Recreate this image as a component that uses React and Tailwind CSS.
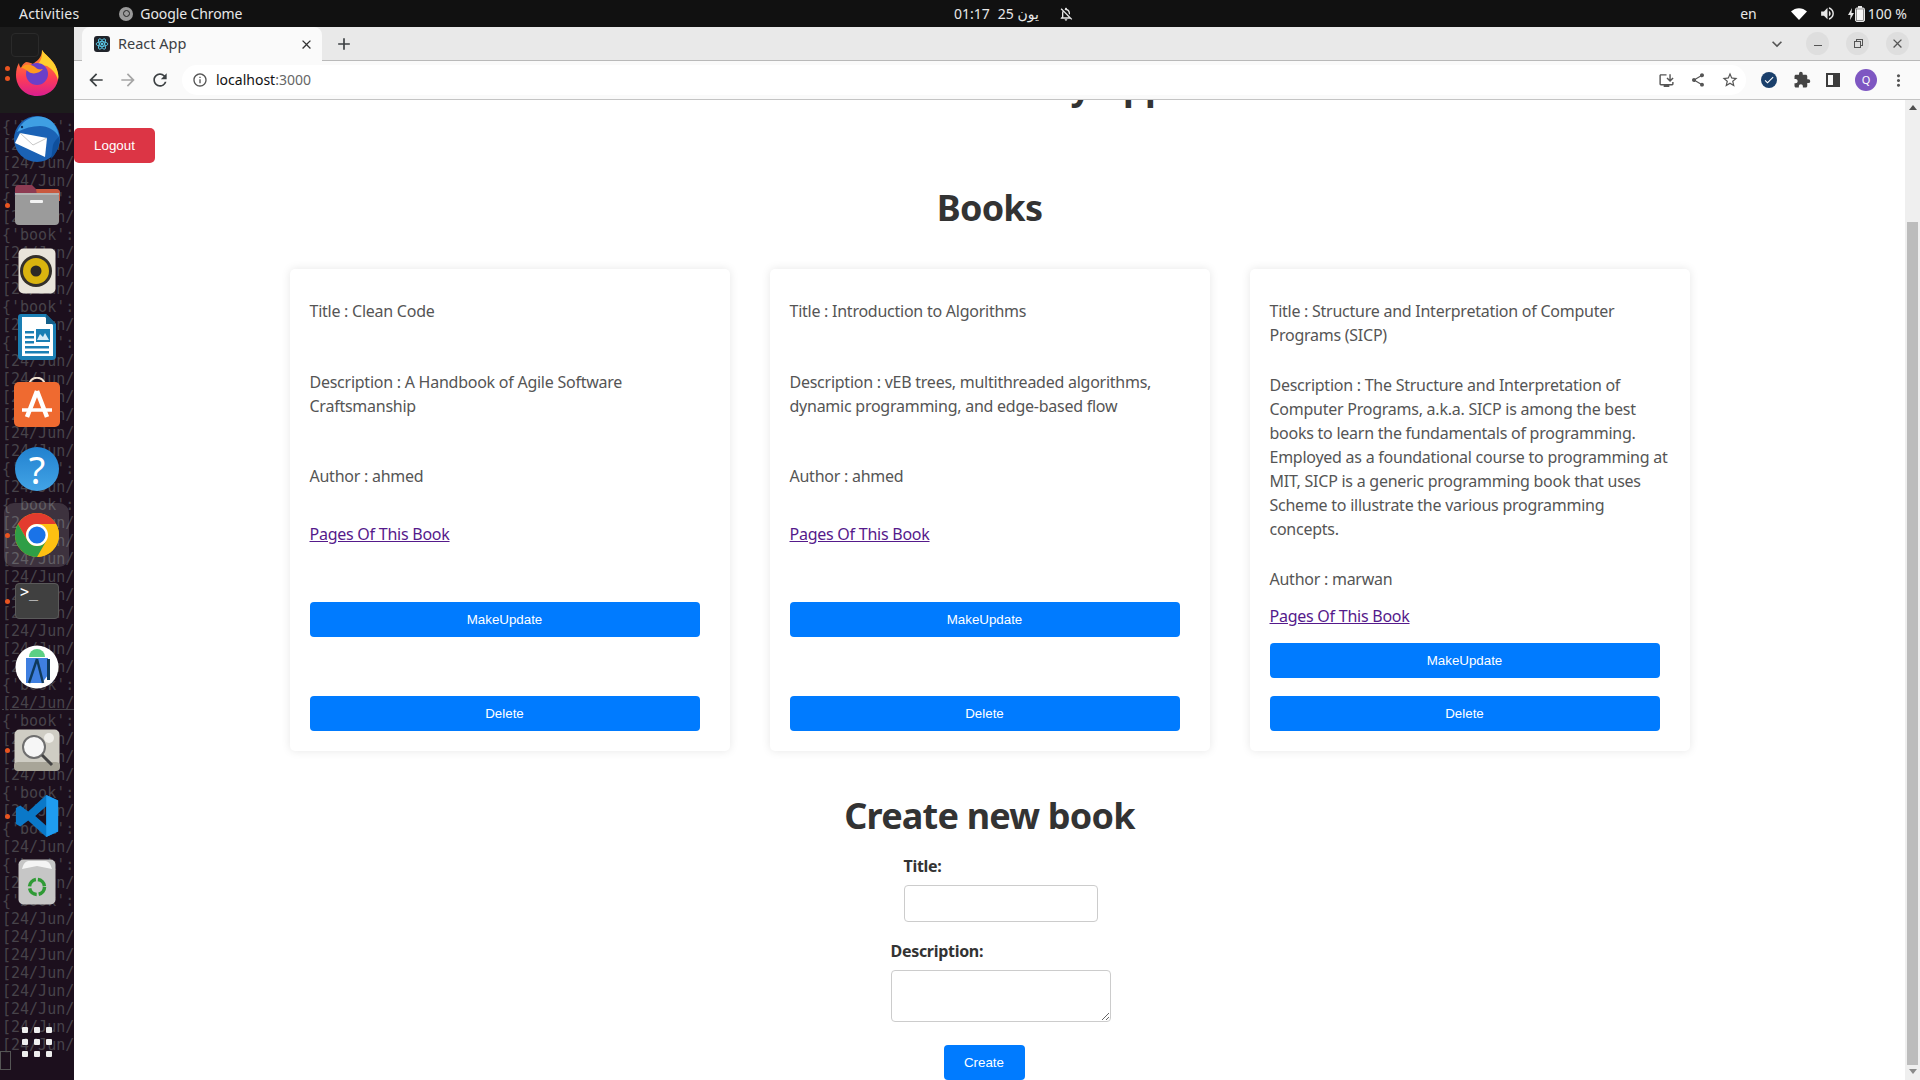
import React from 'react';
import {
    MdArrowBack,
    MdArrowForward,
    MdRefresh,
    MdInfoOutline,
    MdClose,
    MdAdd,
    MdExpandMore,
    MdMoreVert,
    MdExtension,
    MdShare,
    MdStarBorder,
    MdInstallDesktop,
    MdCheck,
    MdVolumeUp,
    MdOutlineNotificationsOff,
} from 'react-icons/md';

const UI_FONT = "font-['Noto_Sans','DejaVu_Sans',sans-serif]";

// b = {'book': line, j = [24/Jun/ line
const TERMINAL_LINES = 'bjjjbjbjjjbjbjjjjjjbjbjjjjjjjjjbjbjjjbjbjbjbjjjjjjjj'.split('');

const books = [
    {
        title: 'Clean Code',
        description: 'A Handbook of Agile Software Craftsmanship',
        author: 'ahmed',
    },
    {
        title: 'Introduction to Algorithms',
        description:
            'vEB trees, multithreaded algorithms, dynamic programming, and edge-based flow',
        author: 'ahmed',
    },
    {
        title: 'Structure and Interpretation of Computer Programs (SICP)',
        description:
            'The Structure and Interpretation of Computer Programs, a.k.a. SICP is among the best books to learn the fundamentals of programming. Employed as a foundational course to programming at MIT, SICP is a generic programming book that uses Scheme to illustrate the various programming concepts.',
        author: 'marwan',
        compact: true,
    },
];

function Firefox() {
    return (
        <svg width="44" height="46" viewBox="0 0 44 46">
            <defs>
                <linearGradient id="ffBody" x1="0" y1="0" x2="0" y2="1">
                    <stop offset="0" stopColor="#ff9b1f" />
                    <stop offset="0.6" stopColor="#ff3d55" />
                    <stop offset="1" stopColor="#d91e8f" />
                </linearGradient>
            </defs>
            <path
                d="M27 0c3 5 9 8 13 15 3 6 4 11 3 15-2 10-11 16-21 16C10 46 1 37 1 25c0-5 1-9 3-12 0 2 1 4 2 5 1-3 3-5 5-6 3 0 5 1 7 2 3-3 9-5 9-14z"
                fill="url(#ffBody)"
            />
            <path d="M27 0c3 5 9 8 13 15 3 6 4 11 3 15-2-7-6-11-11-14-3-1-8-1-11 0 3-3 7-7 6-16z" fill="#ffcf2e" />
            <circle cx="22" cy="24" r="11" fill="#6a3fc8" />
            <path d="M6 18c4-5 10-4 14-1 2 2 4 3 8 2-3 4-10 6-14 3-3-2-5-4-8-4z" fill="#ff9a1f" />
        </svg>
    );
}

function Thunderbird() {
    return (
        <svg width="48" height="48" viewBox="0 0 48 48">
            <circle cx="24" cy="24" r="23" fill="#1b62b5" />
            <path d="M4 17C10 3 22 0 30 2c9 2 15 10 16 20-4-7-11-11-19-11-8 0-15 2-23 6z" fill="#3f9fe3" />
            <path d="M38 44c6-6 9-14 8-22-3 2-5 5-6 8-1 5-1 10-2 14z" fill="#0f4f9c" />
            <path d="M7 18l27 5-2 19L2 28z" fill="#fff" />
            <path d="M7 18l13 12 14-7" fill="none" stroke="#b8b8b8" strokeWidth="0.8" />
            <circle cx="9" cy="12" r="1.2" fill="#0d2f5e" />
        </svg>
    );
}

function Files() {
    return (
        <svg width="46" height="42" viewBox="0 0 46 42">
            <path d="M1 5a4 4 0 0 1 4-4h13l4 4h20a4 4 0 0 1 4 4v8H1z" fill="#8e3b52" />
            <path d="M22 5h20a4 4 0 0 1 4 4v8H24z" fill="#c9593f" />
            <rect x="1" y="9" width="44" height="32" rx="4" fill="#9b9b9b" />
            <rect x="1" y="9" width="44" height="2" fill="#b4b4b4" />
            <rect x="16" y="16" width="13" height="3" rx="1" fill="#f3f3f3" />
        </svg>
    );
}

function Rhythmbox() {
    return (
        <svg width="38" height="46" viewBox="0 0 38 46">
            <rect width="37" height="45" x="0.5" y="0.5" rx="5" fill="#e8e4da" />
            <circle cx="18" cy="23" r="16" fill="#33302b" />
            <circle cx="18" cy="23" r="13" fill="#d9b40f" />
            <circle cx="18" cy="23" r="5.5" fill="#2c2a26" />
        </svg>
    );
}

function Writer() {
    return (
        <svg width="38" height="46" viewBox="0 0 38 46">
            <path d="M3 0h25l10 10v32a4 4 0 0 1-4 4H4a4 4 0 0 1-4-4V3a3 3 0 0 1 3-3z" fill="#1a7fb4" />
            <path d="M4 3h23l8 8v31H4z" fill="#fff" />
            <path d="M28 0l10 10H28z" fill="#135f8a" />
            <rect x="7" y="17" width="9" height="2.5" fill="#1a7fb4" />
            <rect x="7" y="22" width="9" height="2.5" fill="#1a7fb4" />
            <rect x="7" y="27" width="9" height="2.5" fill="#1a7fb4" />
            <rect x="7" y="32" width="24" height="2.5" fill="#1a7fb4" />
            <rect x="7" y="37" width="24" height="2.5" fill="#1a7fb4" />
            <rect x="18" y="15" width="14" height="13" fill="#1a7fb4" />
            <path d="M19 26l3-6 3 3 2-4 4 7z" fill="#d6ecf7" />
        </svg>
    );
}

function Software() {
    return (
        <svg className="-mt-[3px]" width="46" height="50" viewBox="0 0 46 50">
            <path d="M15 9c0-11 16-11 16 0" fill="none" stroke="#f2e3d2" strokeWidth="2" />
            <rect y="5" width="46" height="45" rx="5" fill="#ef6a30" />
            <path d="M23 14L13 40M23 14l10 26" stroke="#fff" strokeWidth="4.5" fill="none" />
            <path d="M8 33h30" stroke="#fff" strokeWidth="3.5" />
        </svg>
    );
}

function Help() {
    return (
        <div className="w-[44px] h-[44px] rounded-full bg-gradient-to-b from-[#2181cf] to-[#42a4e6] flex items-center justify-center text-white text-[38px] leading-none font-['Noto_Sans',sans-serif]">
            ?
        </div>
    );
}

function Chrome() {
    const red = 'M4.95 13A22 22 0 0 1 43.05 13L24 13A11 11 0 0 0 14.47 29.5Z';
    return (
        <svg width="48" height="48" viewBox="0 0 48 48">
            <circle cx="24" cy="24" r="22" fill="#fbbc04" />
            <path d={red} fill="#e33b2e" />
            <path d={red} fill="#fdc012" transform="rotate(120 24 24)" />
            <path d={red} fill="#2f9e46" transform="rotate(240 24 24)" />
            <circle cx="24" cy="24" r="11" fill="#fff" />
            <circle cx="24" cy="24" r="8.6" fill="#1a73e8" />
        </svg>
    );
}

function Terminal() {
    return (
        <div className="w-[44px] h-[36px] rounded-[4px] bg-[#404040] border border-[#5a5a5a] pl-[4px] text-white text-[15px] leading-[16px] font-['DejaVu_Sans_Mono',monospace]">
            &gt;_
        </div>
    );
}

function AndroidStudio() {
    return (
        <svg width="44" height="44" viewBox="0 0 44 44">
            <circle cx="22" cy="22" r="21.5" fill="#fff" />
            <path d="M14 12a8 8 0 0 1 16 0z" fill="#5bd085" />
            <path d="M11 13h22v17l-6 8H11z" fill="#3f7fe0" />
            <path d="M22 14l-8 24M22 14l6 24" stroke="#0f3a5c" strokeWidth="2.4" fill="none" />
            <rect x="32" y="14" width="3" height="21" fill="#0f3a5c" />
        </svg>
    );
}

function Search() {
    return (
        <svg width="46" height="42" viewBox="0 0 46 42">
            <rect width="45" height="41" x="0.5" y="0.5" rx="5" fill="#cfcdc4" />
            <rect y="33" width="46" height="9" rx="4" fill="#a8a598" />
            <circle cx="35" cy="9" r="5" fill="#efeee9" />
            <circle cx="20" cy="18" r="11" fill="#f6f6f6" stroke="#6f6f6f" strokeWidth="2" />
            <path d="M28 26l10 10" stroke="#444" strokeWidth="3" />
        </svg>
    );
}

function VsCode() {
    return (
        <svg width="44" height="44" viewBox="0 0 100 100">
            <path fillRule="evenodd" d="M71 2L98 15V85L71 98L30 60L12 74L2 68V32L12 26L30 40ZM71 28L46 50L71 72Z" fill="#0a78c8" />
            <path d="M71 2L98 15V85L71 98Z" fill="#1f9cf0" />
        </svg>
    );
}

function Trash() {
    return (
        <svg width="38" height="46" viewBox="0 0 38 46">
            <rect width="37" height="45" x="0.5" y="0.5" rx="5" fill="#c6c6c6" />
            <path d="M4 10C6 3 8 2 12 2h14c4 0 6 1 8 8l-15-3z" fill="#f4f4f4" />
            <circle cx="19" cy="28" r="7.5" fill="none" stroke="#2f9a35" strokeWidth="3.5" strokeDasharray="10 2" />
        </svg>
    );
}

function Battery() {
    return (
        <svg width="17" height="16" viewBox="0 0 17 16">
            <path d="M4 2L0 9h2.500L2 14l4-7H3.500z" fill="#e8e8e8" />
            <rect x="7.500" y="2" width="9" height="13.500" rx="1.500" fill="#e8e8e8" stroke="#e8e8e8" />
            <rect x="10" y="0" width="4" height="2" fill="#e8e8e8" />
            <rect x="8.500" y="3" width="7" height="11.500" fill="#f8f8f8" stroke="#333" strokeWidth="0.500" />
        </svg>
    );
}

function Wifi() {
    return (
        <svg width="16" height="12" viewBox="0 0 16 12">
            <path d="M0 3.500C4.500-1 11.500-1 16 3.500L8 12z" fill="#fff" />
        </svg>
    );
}

function DockItem({ dots = 0, active, className = '', children }) {
    return (
        <div className={`relative h-[66px] w-[74px] flex items-center justify-center shrink-0 ${className}`}>
            {active && (
                <span className="absolute left-[4px] right-[5px] top-px bottom-px rounded-[10px] bg-white/15" />
            )}
            {dots > 0 && (
                <span className="absolute left-[5px] top-0 bottom-0 flex flex-col justify-center gap-[5px]">
                    {Array.from({ length: dots }).map((_, i) => (
                        <span key={i} className="w-[5px] h-[5px] rounded-full bg-[#e95420]" />
                    ))}
                </span>
            )}
            <span className="relative">{children}</span>
        </div>
    );
}

function Dock() {
    return (
        <div className="relative w-[74px] shrink-0 overflow-hidden bg-[#1c0f1d]">
            <div className="h-[86px] bg-[#1c1c1c] flex flex-col items-center pt-[6px] pr-[24px]">
                <div className="w-[28px] h-[24px] rounded-[4px] border border-[#2a2a2a]"></div>
            </div>
            <div className="pt-[5px] pl-[2px] text-[15px] leading-[18px] text-[#47434a] font-['DejaVu_Sans_Mono',monospace] whitespace-nowrap">
                {TERMINAL_LINES.map((line, i) => (
                    <div key={i} className={i === 32 ? 'underline' : ''}>
                        {line === 'b' ? "{'book':" : '[24/Jun/'}
                    </div>
                ))}
            </div>

            <div className="absolute inset-0 flex flex-col pt-[13px]">
                <DockItem dots={2}><Firefox /></DockItem>
                <DockItem><Thunderbird /></DockItem>
                <DockItem dots={1}><Files /></DockItem>
                <DockItem><Rhythmbox /></DockItem>
                <DockItem><Writer /></DockItem>
                <DockItem><Software /></DockItem>
                <DockItem><Help /></DockItem>
                <DockItem dots={1} active><Chrome /></DockItem>
                <DockItem dots={1}><Terminal /></DockItem>
                <DockItem><AndroidStudio /></DockItem>
                <DockItem dots={1} className="mt-[17px]"><Search /></DockItem>
                <DockItem dots={1}><VsCode /></DockItem>
                <DockItem><Trash /></DockItem>
                <div className="mt-[112px] pl-[22px] grid grid-cols-3 gap-x-[6px] gap-y-[6px] w-fit">
                    {Array.from({ length: 9 }).map((_, i) => (
                        <span key={i} className="w-[6px] h-[6px] rounded-[1px] bg-[#eeeeee]" />
                    ))}
                </div>
            </div>
            <div className="absolute left-0 bottom-[10px] w-[11px] h-[19px] border border-[#555]"></div>
        </div>
    );
}

function TopBar() {
    return (
        <div className={`relative h-[27px] shrink-0 bg-[#111111] text-[#e8e8e8] text-[14px] flex items-center ${UI_FONT}`}>
            <span className="ml-[19px] tracking-[0.2px]">Activities</span>
            <span className="ml-[40px] w-[14px] h-[14px] rounded-full bg-[#9a9a9a] flex items-center justify-center">
                <span className="w-[7px] h-[7px] rounded-full border border-[#222]"></span>
            </span>
            <span className="ml-[7px] tracking-[-0.1px]">Google Chrome</span>

            <div className="absolute left-[954px] top-0 h-full flex items-center gap-[8px]">
                <span>01:17</span>
                <span>25 يون</span>
                <MdOutlineNotificationsOff className="ml-[11px] text-[16px]" />
            </div>

            <div className="ml-auto flex items-center mr-[13px]">
                <span>en</span>
                <span className="ml-[34px]"><Wifi /></span>
                <MdVolumeUp className="ml-[12px] text-[17px]" />
                <span className="ml-[12px]"><Battery /></span>
                <span className="ml-[3px]">100 %</span>
            </div>
        </div>
    );
}

function TabStrip() {
    return (
        <div className={`h-[34px] shrink-0 bg-[#e9e9e9] border-b border-[#b9b9b9] flex items-stretch pl-[8px] ${UI_FONT}`}>
            <div className="w-[240px] -mb-px bg-[#fafafa] rounded-t-[8px] flex items-center pl-[12px] pr-[8px] text-[14.5px] text-[#3c4043]">
                <span className="w-[16px] h-[16px] rounded-[3px] bg-[#20232a] flex items-center justify-center">
                    <svg width="14" height="14" viewBox="0 0 24 24" fill="none" stroke="#61dafb" strokeWidth="1.4">
                        <ellipse cx="12" cy="12" rx="10" ry="4" />
                        <ellipse cx="12" cy="12" rx="10" ry="4" transform="rotate(60 12 12)" />
                        <ellipse cx="12" cy="12" rx="10" ry="4" transform="rotate(120 12 12)" />
                        <circle cx="12" cy="12" r="1.6" fill="#61dafb" />
                    </svg>
                </span>
                <span className="ml-[8px] flex-1">React App</span>
                <MdClose className="text-[15px] text-[#333]" />
            </div>
            <div className="ml-[12px] flex items-center">
                <MdAdd className="text-[20px] text-[#3c4043]" />
            </div>
            <div className="ml-auto flex items-center text-[#555]">
                <MdExpandMore className="text-[20px] mr-[19px]" />
                {[
                    <span key="m" className="w-[8px] h-px mt-[4px] bg-[#555]" />,
                    <span key="r" className="relative w-[7px] h-[7px] border border-[#555] bg-[#dedede] mt-[1px] -ml-[1px] shadow-[2px_-2px_0_-1px_#dedede,2px_-2px_0_0_#555]" />,
                    <MdClose key="c" className="text-[15px]" />,
                ].map((icon, i) => (
                    <span key={i} className="w-[23px] h-[23px] rounded-full bg-[#dedede] flex items-center justify-center mr-[17px] last:mr-[11px]">
                        {icon}
                    </span>
                ))}
            </div>
        </div>
    );
}

function Toolbar() {
    return (
        <div className={`h-[39px] shrink-0 bg-[#fafafa] border-b border-[#c4c4c4] flex items-center ${UI_FONT}`}>
            <MdArrowBack className="ml-[12px] text-[20px] text-[#3c4043]" />
            <MdArrowForward className="ml-[12px] text-[20px] text-[#a5a5a5]" />
            <MdRefresh className="ml-[12px] text-[20px] text-[#3c4043]" />
            <div className="ml-[12px] w-[1564px] h-[30px] rounded-full bg-white flex items-center pl-[10px]">
                <MdInfoOutline className="text-[16px] text-[#555]" />
                <span className="ml-[8px] -mt-px text-[14px] text-[#111]">
                    localhost<span className="text-[#666]">:3000</span>
                </span>
                <MdInstallDesktop className="ml-auto text-[17px] text-[#555]" />
                <MdShare className="ml-[15px] text-[16px] text-[#555]" />
                <MdStarBorder className="ml-[15px] mr-[7px] text-[18px] text-[#555]" />
            </div>
            <span className="ml-[15px] w-[16px] h-[16px] rounded-full bg-[#1a3f6b] flex items-center justify-center">
                <MdCheck className="text-[12px] text-white" />
            </span>
            <MdExtension className="ml-[16px] text-[18px] text-[#444]" />
            <span className="ml-[15px] w-[14px] h-[14px] border-[2px] border-[#3c3c3c] border-r-[7px]"></span>
            <span className="ml-[15px] w-[22px] h-[22px] rounded-full bg-[#7e57c2] text-white text-[11px] flex items-center justify-center">
                Q
            </span>
            <MdMoreVert className="ml-[12px] text-[19px] text-[#555]" />
        </div>
    );
}

function Scrollbar() {
    return (
        <div className="w-[15px] shrink-0 bg-[#efefef] flex flex-col items-center">
            <svg className="mt-[5px]" width="8" height="5" viewBox="0 0 8 5"><path d="M4 0l4 5H0z" fill="#505050" /></svg>
            <div className="mt-[112px] w-[11px] h-[843px] bg-[#bcbcbc]"></div>
            <svg className="mt-[4px]" width="8" height="5" viewBox="0 0 8 5"><path d="M0 0h8L4 5z" fill="#8a8a8a" /></svg>
        </div>
    );
}

function BlueButton({ className = '', children }) {
    return (
        <button
            type="button"
            className={`h-[35px] rounded-[4px] bg-[#007bff] text-white text-[13.33px] tracking-normal font-['Liberation_Sans',sans-serif] ${className}`}
        >
            {children}
        </button>
    );
}

function BookCard({ book }) {
    const { compact } = book;
    return (
        <div className="w-[440px] h-[482px] shrink-0 rounded-[5px] bg-white shadow-[0_0_10px_rgba(0,0,0,0.1)] px-[20px] pt-[30px] text-[#555] text-[16px] leading-[24px] tracking-[-0.25px]">
            <p>Title : {book.title}</p>
            <p className={compact ? 'mt-[26px]' : 'mt-[47px]'}>Description : {book.description}</p>
            <p className={compact ? 'mt-[26px]' : 'mt-[46px]'}>Author : {book.author}</p>
            <a href="#" className={`block w-fit underline text-[#551a8b] ${compact ? 'mt-[13px]' : 'mt-[34px]'}`}>
                Pages Of This Book
            </a>
            <BlueButton className={`block w-[390px] ${compact ? 'mt-[15px]' : 'mt-[56px]'}`}>MakeUpdate</BlueButton>
            <BlueButton className={`block w-[390px] ${compact ? 'mt-[18px]' : 'mt-[59px]'}`}>Delete</BlueButton>
        </div>
    );
}

function Page() {
    return (
        <div className="flex-1 min-w-0 overflow-hidden bg-white text-[#333]">
            <h1 className="-mt-[36px] pl-[60px] text-center text-[36px] leading-[44px] font-bold tracking-[-0.8px]">Book Library App</h1>
            <button
                type="button"
                className="block mt-[20px] w-[81px] h-[35px] rounded-[5px] bg-[#dc3545] text-white text-[13.33px] font-['Liberation_Sans',sans-serif]"
            >
                Logout
            </button>
            <h2 className="mt-[23px] text-center text-[36px] leading-[44px] font-bold tracking-[-0.8px]">Books</h2>
            <div className="mt-[39px] flex justify-center gap-[40px]">
                {books.map(book => (
                    <BookCard key={book.title} book={book} />
                ))}
            </div>
            <h2 className="mt-[43px] text-center text-[36px] leading-[44px] font-bold tracking-[-0.8px]">Create new book</h2>
            <form className="flex flex-col items-center">
                <div className="ml-[22px] mt-[16px] flex flex-col w-[194px]">
                    <label className="text-[16px] leading-[24px] font-bold tracking-[-0.3px]">Title:</label>
                    <input type="text" className="mt-[7px] h-[37px] rounded-[4px] border border-[#ccc] bg-white" />
                </div>
                <div className="ml-[22px] mt-[17px] flex flex-col w-[220px]">
                    <label className="text-[16px] leading-[24px] font-bold tracking-[-0.3px]">Description:</label>
                    <textarea className="mt-[7px] h-[52px] rounded-[4px] border border-[#ccc] bg-white block"></textarea>
                </div>
                <BlueButton className="-ml-[11px] mt-[23px] w-[81px] shrink-0">Create</BlueButton>
            </form>
        </div>
    );
}

export default function App() {
    return (
        <div className="h-screen w-screen overflow-hidden flex flex-col font-['Noto_Sans','DejaVu_Sans',sans-serif]">
            <TopBar />
            <div className="flex-1 min-h-0 flex">
                <Dock />
                <div className="flex-1 min-w-0 flex flex-col">
                    <TabStrip />
                    <Toolbar />
                    <div className="flex-1 min-h-0 flex">
                        <Page />
                        <Scrollbar />
                    </div>
                </div>
            </div>
        </div>
    );
}
